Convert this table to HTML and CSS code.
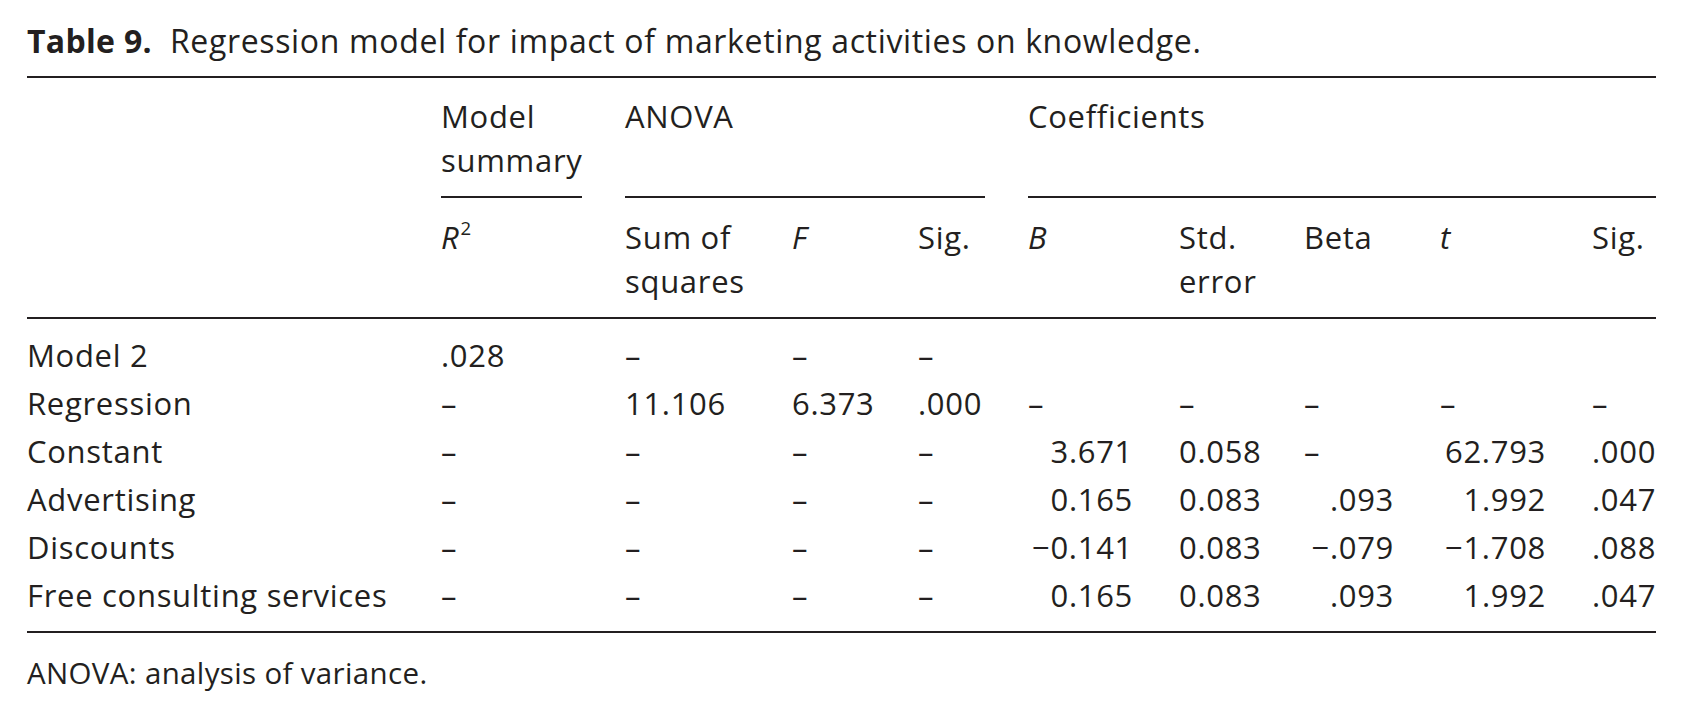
FILE: index.html
```html
<!DOCTYPE html>
<html lang="en">
<head>
<meta charset="utf-8">
<title>Table 9. Regression model for impact of marketing activities on knowledge.</title>
<link rel="stylesheet" href="styles.css">
</head>
<body>
<div class="page">
  <h1 class="caption"><span class="label">Table 9.</span><span class="cap-text">Regression model for impact of marketing activities on knowledge.</span></h1>
  <table class="stats">
    <colgroup>
      <col class="c-label">
      <col class="c-r2">
      <col class="c-ss">
      <col class="c-f">
      <col class="c-sig1">
      <col class="c-b">
      <col class="c-se">
      <col class="c-beta">
      <col class="c-t">
      <col class="c-sig2">
    </colgroup>
    <thead>
      <tr class="group-row">
        <th></th>
        <th><div class="grp">Model<br>summary</div></th>
        <th colspan="3"><div class="grp">ANOVA</div></th>
        <th colspan="5" class="last"><div class="grp">Coefficients</div></th>
      </tr>
      <tr class="sub-row">
        <th></th>
        <th><i>R</i><sup>2</sup></th>
        <th>Sum of<br>squares</th>
        <th><i>F</i></th>
        <th>Sig.</th>
        <th><i>B</i></th>
        <th>Std.<br>error</th>
        <th>Beta</th>
        <th><i>t</i></th>
        <th class="last">Sig.</th>
      </tr>
    </thead>
    <tbody>
      <tr class="first">
        <td>Model 2</td>
        <td>.028</td>
        <td>–</td>
        <td>–</td>
        <td>–</td>
        <td></td>
        <td></td>
        <td></td>
        <td></td>
        <td class="last"></td>
      </tr>
      <tr>
        <td>Regression</td>
        <td>–</td>
        <td>11.106</td>
        <td>6.373</td>
        <td>.000</td>
        <td>–</td>
        <td>–</td>
        <td>–</td>
        <td>–</td>
        <td class="last">–</td>
      </tr>
      <tr>
        <td>Constant</td>
        <td>–</td>
        <td>–</td>
        <td>–</td>
        <td>–</td>
        <td class="r">3.671</td>
        <td>0.058</td>
        <td>–</td>
        <td class="r">62.793</td>
        <td class="last">.000</td>
      </tr>
      <tr>
        <td>Advertising</td>
        <td>–</td>
        <td>–</td>
        <td>–</td>
        <td>–</td>
        <td class="r">0.165</td>
        <td>0.083</td>
        <td class="r">.093</td>
        <td class="r">1.992</td>
        <td class="last">.047</td>
      </tr>
      <tr>
        <td>Discounts</td>
        <td>–</td>
        <td>–</td>
        <td>–</td>
        <td>–</td>
        <td class="r">−0.141</td>
        <td>0.083</td>
        <td class="r">−.079</td>
        <td class="r">−1.708</td>
        <td class="last">.088</td>
      </tr>
      <tr class="lastrow">
        <td>Free consulting services</td>
        <td>–</td>
        <td>–</td>
        <td>–</td>
        <td>–</td>
        <td class="r">0.165</td>
        <td>0.083</td>
        <td class="r">.093</td>
        <td class="r">1.992</td>
        <td class="last">.047</td>
      </tr>
    </tbody>
  </table>
  <p class="note">ANOVA: analysis of variance.</p>
</div>
</body>
</html>
```

FILE: styles.css
```css
html, body {
  margin: 0;
  padding: 0;
  background: #ffffff;
}

body {
  font-family: "Open Sans", "Lato", "Liberation Sans", sans-serif;
  color: #231f20;
}

.page {
  padding: 21px 26px 0 27px;
}

.caption {
  margin: 0;
  font-size: 32px;
  line-height: 40px;
  font-weight: 400;
  letter-spacing: 0.65px;
  white-space: nowrap;
}

.caption .label {
  font-weight: 700;
  letter-spacing: 0.3px;
  margin-right: 18px;
}

.stats {
  margin-top: 15px;
  width: 1629px;
  border-collapse: collapse;
  table-layout: fixed;
  font-size: 31px;
  letter-spacing: 0.7px;
  border-top: 2px solid #231f20;
}

.c-label { width: 414px; }
.c-r2 { width: 184px; }
.c-ss { width: 167px; }
.c-f { width: 126px; }
.c-sig1 { width: 110px; }
.c-b { width: 151px; }
.c-se { width: 125px; }
.c-beta { width: 136px; }
.c-t { width: 152px; }
.c-sig2 { width: 64px; }

.stats th,
.stats td {
  padding: 0 43px 0 0;
  text-align: left;
  vertical-align: top;
  font-weight: 400;
  white-space: nowrap;
}

.stats th.last,
.stats td.last {
  padding-right: 0;
}

.group-row th {
  padding-top: 16px;
  line-height: 44px;
}

.grp {
  min-height: 88px;
  padding-bottom: 14px;
  border-bottom: 2px solid #231f20;
}

.sub-row {
  border-bottom: 2px solid #231f20;
}

.sub-row th {
  padding-top: 17px;
  padding-bottom: 14px;
  line-height: 44px;
  height: 88px;
}

.stats sup {
  font-size: 0.6em;
  line-height: 0;
  vertical-align: 0.75em;
  margin-left: 1px;
}

.stats tbody td {
  line-height: 48px;
}

.stats tbody tr.first td {
  padding-top: 12px;
}

.stats tbody tr.lastrow {
  border-bottom: 2px solid #231f20;
}

.stats tbody tr.lastrow td {
  padding-bottom: 12px;
}

.stats td.r {
  text-align: right;
  padding-right: 46px;
}

.note {
  margin: 20px 0 0;
  font-size: 29.5px;
  letter-spacing: 0.35px;
  line-height: 40px;
}
```
